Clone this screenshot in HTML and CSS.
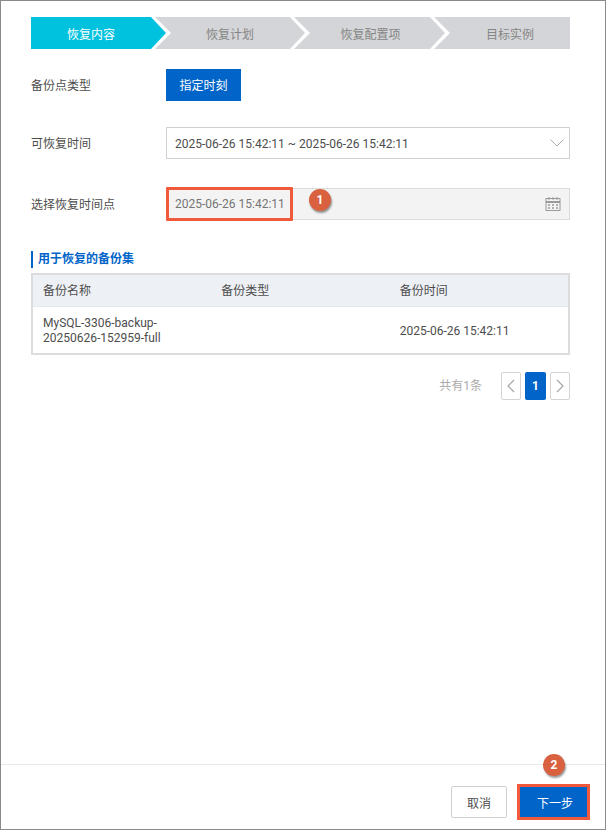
FILE: index.html
```
<!DOCTYPE html>
<html lang="zh-CN">
<head>
<meta charset="utf-8">
<title>恢复内容</title>
<link rel="stylesheet" href="styles.css">
</head>
<body>
<div class="frame">
  <main class="content">
    <ol class="steps">
      <li class="step step-first active">恢复内容</li>
      <li class="step step-second">恢复计划</li>
      <li class="step step-third">恢复配置项</li>
      <li class="step step-last">目标实例</li>
    </ol>
    <div class="row row-type">
      <span class="label">备份点类型</span>
      <button class="type-btn">指定时刻</button>
    </div>
    <div class="row row-range">
      <span class="label">可恢复时间</span>
      <div class="select">
        <span class="select-value">2025-06-26 15:42:11 ~ 2025-06-26 15:42:11</span>
        <svg class="chev" width="14" height="8" viewBox="0 0 14 8"><path d="M0.5 0.5 L7 7 L13.5 0.5" fill="none" stroke="#a9adb2" stroke-width="1"/></svg>
      </div>
    </div>
    <div class="row row-point">
      <span class="label">选择恢复时间点</span>
      <div class="date">
        <span class="date-value">2025-06-26 15:42:11</span>
        <svg class="cal" width="16" height="14" viewBox="0 0 16 14" fill="none" stroke="#9a9a9a">
          <rect x="1" y="1.5" width="14" height="12"/>
          <path d="M1 5h14" stroke-width="2"/>
          <path d="M4 0v3M8 0v3M12 0v3" />
          <path d="M3 8h2M7 8h2M11 8h2M3 11h2M7 11h2M11 11h2" stroke-width="1.4"/>
        </svg>
        <span class="mark mark-date"></span>
        <span class="badge badge-one">1</span>
      </div>
    </div>
    <h2 class="section">用于恢复的备份集</h2>
    <table class="table">
      <thead>
        <tr><th>备份名称</th><th>备份类型</th><th>备份时间</th></tr>
      </thead>
      <tbody>
        <tr><td>MySQL-3306-backup-<br>20250626-152959-full</td><td></td><td>2025-06-26 15:42:11</td></tr>
      </tbody>
    </table>
    <div class="pager">
      <span class="total">共有1条</span>
      <button class="page-btn page-arrow"><svg width="8" height="14" viewBox="0 0 8 14"><path d="M7 1 L1 7 L7 13" fill="none" stroke="#a6a6a6" stroke-width="1.2"/></svg></button>
      <button class="page-btn page-current">1</button>
      <button class="page-btn page-arrow"><svg width="8" height="14" viewBox="0 0 8 14"><path d="M1 1 L7 7 L1 13" fill="none" stroke="#a6a6a6" stroke-width="1.2"/></svg></button>
    </div>
  </main>
  <footer class="footer">
    <button class="btn btn-cancel">取消</button>
    <button class="btn btn-next">下一步</button>
    <span class="badge badge-two">2</span>
  </footer>
</div>
</body>
</html>
```
FILE: styles.css
```
* { box-sizing: border-box; }
html, body { margin: 0; padding: 0; }
body {
  width: 606px;
  height: 830px;
  overflow: hidden;
  background: #fff;
  font-family: "Roboto", "Noto Sans CJK SC", sans-serif;
  font-size: 12px;
  color: #4d4d4d;
}
button { font: inherit; cursor: pointer; }
.frame {
  height: 830px;
  border: 1px solid #8a8a8a;
  display: flex;
  flex-direction: column;
}
.content {
  flex: 1;
  padding: 16px 35px 0 30px;
}
.steps {
  list-style: none;
  margin: 0;
  padding: 0;
  display: flex;
  height: 32px;
}
.step {
  display: flex;
  align-items: center;
  justify-content: center;
  background: #d4d5d8;
  color: #858585;
  margin-left: -11px;
  clip-path: polygon(0 0, calc(100% - 15px) 0, 100% 50%, calc(100% - 15px) 100%, 0 100%, 16px 50%);
}
.step-first {
  width: 135px;
  margin-left: 0;
  padding-right: 15px;
  clip-path: polygon(0 0, calc(100% - 15px) 0, 100% 50%, calc(100% - 15px) 100%, 0 100%);
}
.active { background: #00c1de; color: #fff; }
.step-second { width: 150px; }
.step-third { width: 151px; padding-left: 2px; }
.step-last {
  width: 136px;
  padding-left: 16px;
  clip-path: polygon(0 0, 100% 0, 100% 100%, 0 100%, 16px 50%);
}
.row { display: flex; align-items: center; }
.label { width: 135px; flex: none; color: #4d4d4d; padding-bottom: 2px; }
.row-type { margin-top: 20px; }
.row-range { margin-top: 26px; }
.row-point { margin-top: 29px; }
.type-btn {
  width: 75px;
  height: 32px;
  border: 0;
  padding: 0 0 2px;
  background: #0064c8;
  color: #fff;
}
.select {
  flex: 1;
  height: 32px;
  border: 1px solid #d0d0d0;
  display: flex;
  align-items: center;
  justify-content: space-between;
  padding: 0 5px 0 8px;
  background: #fff;
}
.select-value { padding-top: 2px; }
.date {
  position: relative;
  flex: 1;
  height: 32px;
  border: 1px solid #dcdcdc;
  background: #f3f3f3;
  display: flex;
  align-items: center;
  justify-content: space-between;
  padding: 0 8px 0 8px;
  color: #757575;
}
.mark {
  position: absolute;
  left: -1px;
  top: -2px;
  width: 127px;
  height: 34px;
  border: 3px solid #f0593a;
  border-radius: 1px;
}
.badge {
  position: absolute;
  width: 22px;
  height: 22px;
  border-radius: 50%;
  background: #d9613f;
  color: #fff;
  font-weight: 700;
  font-size: 12px;
  display: flex;
  align-items: center;
  justify-content: center;
  box-shadow: 1px 2px 2px rgba(0, 0, 0, 0.4);
}
.badge-one { left: 142px; top: 0px; }
.section {
  margin: 31px 0 0;
  height: 17px;
  line-height: 17px;
  border-left: 2px solid #0064c8;
  padding-left: 5px;
  font-size: 12px;
  font-weight: 700;
  color: #0064c8;
}
.table {
  width: 539px;
  margin-top: 5px;
  border-collapse: separate;
  border-spacing: 0;
  border: 2px solid #dcdcdc;
  table-layout: fixed;
  color: #4d4d4d;
}
.table th, .table td {
  text-align: left;
  font-weight: 400;
  padding: 0 10px;
}
.table th {
  height: 32px;
  padding-bottom: 2px;
  background: #edf0f5;
  border-bottom: 1px solid #e6e8ec;
}
.table td { height: 46px; line-height: 15px; padding-top: 2px; }
.pager {
  display: flex;
  align-items: center;
  justify-content: flex-end;
  gap: 4px;
  margin-top: 17px;
  height: 28px;
}
.total { color: #aaa; margin-right: 15px; padding-bottom: 4px; }
.page-btn {
  height: 28px;
  padding: 0;
  border: 1px solid #d4d4d4;
  border-radius: 2px;
  background: #fff;
  display: flex;
  align-items: center;
  justify-content: center;
}
.page-arrow { width: 20px; }
.page-current {
  width: 21px;
  border: 0;
  background: #0064c8;
  color: #fff;
  font-weight: 700;
}
.footer {
  position: relative;
  height: 65px;
  border-top: 1px solid #e8e8e8;
  display: flex;
  justify-content: flex-end;
  align-items: flex-start;
  gap: 13px;
  padding: 21px 18px 0 0;
}
.btn { height: 32px; padding: 0; }
.btn-cancel {
  width: 56px;
  border: 1px solid #d0d0d0;
  border-radius: 2px;
  background: #fff;
  color: #4d4d4d;
}
.btn-next {
  width: 67px;
  height: 30px;
  margin-top: 1px;
  padding-left: 3px;
  border: 0;
  background: #0064c8;
  color: #fff;
  box-shadow: 0 0 0 3px #f0593a;
}
.badge-two { left: 542px; top: -11px; }
```
